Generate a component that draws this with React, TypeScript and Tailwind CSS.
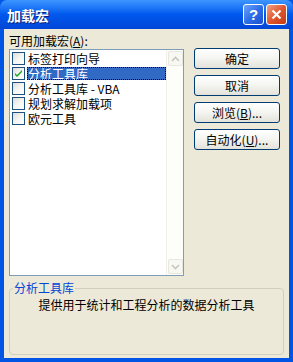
import React from 'react'

const items = [
  { label: '标签打印向导', checked: false },
  { label: '分析工具库', checked: true, selected: true },
  { label: '分析工具库 - VBA', checked: false },
  { label: '规划求解加载项', checked: false },
  { label: '欧元工具', checked: false },
]

const font = { fontFamily: '"Noto Sans CJK SC", "Liberation Sans", sans-serif' }

function CheckBox({ checked }: { checked: boolean }) {
  return (
    <div className="w-[13px] h-[13px] shrink-0 border border-[#1C5180] bg-gradient-to-br from-[#DCDCD7] via-[#F5F5F2] to-white flex items-center justify-center">
      {checked && (
        <svg width="9" height="9" viewBox="0 0 9 9">
          <path d="M1 4 L3 6 L8 1 L8 3 L3 8 L1 6 Z" fill="#21A121" />
        </svg>
      )}
    </div>
  )
}

function XpButton({ children }: { children: React.ReactNode }) {
  return (
    <button className="w-[86px] h-[21px] rounded-[3px] border border-[#003C74] bg-gradient-to-b from-white via-[#F4F4F0] to-[#E3E2DA] text-[12px] leading-none text-black flex items-center justify-center">
      {children}
    </button>
  )
}

function ScrollArrow({ down }: { down?: boolean }) {
  return (
    <div className="w-[15px] h-[15px] rounded-[2px] border border-[#E8E8DF] bg-[#F7F7F3] flex items-center justify-center">
      <svg width="9" height="6" viewBox="0 0 9 6">
        <path d={down ? 'M1 1 L4.5 4.5 L8 1' : 'M1 5 L4.5 1.5 L8 5'} stroke="#C9C7BA" strokeWidth="1.6" fill="none" />
      </svg>
    </div>
  )
}

export default function App() {
  return (
    <div className="w-[293px] h-[362px] flex flex-col bg-[#0055E5] overflow-hidden" style={font}>
      {/* Title bar */}
      <div className="h-[29px] shrink-0 rounded-t-[7px] bg-gradient-to-b from-[#3D95FF] via-[#0058EE] to-[#0046D6] flex items-center pl-[7px] pr-[6px]">
        <span className="text-white font-bold text-[14px] leading-[18px] [text-shadow:1px_1px_0_#0A1E78] flex-1">加载宏</span>
        <div className="flex gap-[2px]">
          <div className="w-[21px] h-[21px] rounded-[3px] border border-white bg-gradient-to-br from-[#6FA3F8] via-[#2F6EE8] to-[#1B4FCF] flex items-center justify-center text-white font-bold text-[15px] leading-none" style={{ fontFamily: '"Liberation Sans", sans-serif' }}>?</div>
          <div className="w-[21px] h-[21px] rounded-[3px] border border-white bg-gradient-to-br from-[#F0A184] via-[#E0562E] to-[#C23A14] flex items-center justify-center">
            <svg width="11" height="11" viewBox="0 0 11 11">
              <path d="M1.5 1.5 L9.5 9.5 M9.5 1.5 L1.5 9.5" stroke="white" strokeWidth="2.2" />
            </svg>
          </div>
        </div>
      </div>

      {/* Client area */}
      <div className="flex-1 mx-[4px] mb-[4px] bg-[#ECE9D8] flex flex-col px-[5px] pt-[4px]">
        <div className="flex gap-[10px]">
          <div className="flex flex-col w-[175px]">
            <div className="text-[12px] leading-[16px] h-[16px] text-black">可用加载宏(<span className="underline">A</span>):</div>
            <div className="h-[227px] border border-[#7F9DB9] bg-white flex">
              <div className="flex-1 flex flex-col pt-[1px] pl-[2px]">
                {items.map((it) => (
                  <div key={it.label} className="h-[15px] flex items-center gap-[2px] overflow-hidden">
                    <CheckBox checked={it.checked} />
                    <span
                      className={
                        it.selected
                          ? 'text-[12px] leading-[13px] h-[13px] px-[1px] flex-1 bg-[#316AC5] text-white outline outline-1 outline-dotted outline-[#000] -outline-offset-1'
                          : 'text-[12px] leading-[13px] h-[13px] px-[1px] text-black'
                      }
                    >
                      {it.label}
                    </span>
                  </div>
                ))}
              </div>
              <div className="w-[17px] bg-[#FDFDFA] border-l border-[#F0EFE8] flex flex-col justify-between p-[1px]">
                <ScrollArrow />
                <ScrollArrow down />
              </div>
            </div>
          </div>
          <div className="flex flex-col pt-[15px] gap-[6px]">
            <XpButton>确定</XpButton>
            <XpButton>取消</XpButton>
            <XpButton>浏览(<span className="underline">B</span>)...</XpButton>
            <XpButton>自动化(<span className="underline">U</span>)...</XpButton>
          </div>
        </div>

        {/* Group box */}
        <div className="relative mt-[12px] h-[67px] border border-[#D0D0BF] rounded-[4px]">
          <span className="absolute -top-[9px] left-[3px] px-[1px] bg-[#ECE9D8] text-[12px] leading-[16px] text-[#0046D5]">分析工具库</span>
          <div className="pt-[8px] text-center text-[12px] leading-[16px] text-black">提供用于统计和工程分析的数据分析工具</div>
        </div>
      </div>
    </div>
  )
}
